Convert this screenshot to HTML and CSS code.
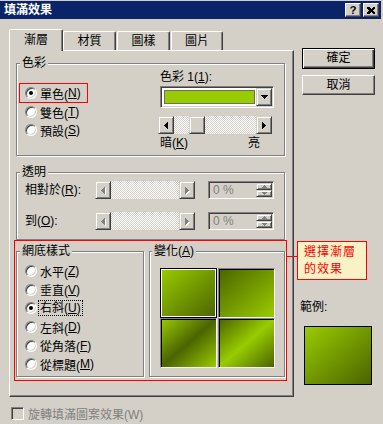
FILE: index.html
```html
<!DOCTYPE html>
<html lang="zh-Hant">
<head>
    <meta charset="UTF-8">
    <title>填滿效果</title>
    <link rel="stylesheet" href="styles.css">
</head>
<body>
<div class="window">
    <div class="titlebar">
        <span class="title">填滿效果</span>
        <span class="caption-btns">
            <span class="cap-btn">?</span>
            <span class="cap-btn">
                <svg width="8" height="7" viewBox="0 0 8 7" shape-rendering="crispEdges"><path d="M0 0h2l2 2 2-2h2v1l-2 2.5 2 2.5v1h-2l-2-2-2 2h-2v-1l2-2.5-2-2.5z"/></svg>
            </span>
        </span>
    </div>

    <div class="content">
        <div class="main">
            <div class="tabs">
                <div class="tab active">漸層</div>
                <div class="tab">材質</div>
                <div class="tab">圖樣</div>
                <div class="tab last">圖片</div>
            </div>
            <div class="panel">
                <fieldset class="group">
                    <legend>色彩</legend>
                    <div class="color-body">
                        <div class="radio-col">
                            <div class="radio marked"><span class="rb on"></span>單色(<u>N</u>)</div>
                            <div class="radio"><span class="rb"></span>雙色(<u>T</u>)</div>
                            <div class="radio"><span class="rb"></span>預設(<u>S</u>)</div>
                        </div>
                        <div class="color-col">
                            <div class="field-label">色彩 1(<u>1</u>):</div>
                            <div class="combo">
                                <span class="swatch"></span>
                                <span class="btn3d drop-btn">
                                    <svg width="7" height="4" viewBox="0 0 7 4" shape-rendering="crispEdges"><path d="M0 0H7V1H6V2H5V3H4V4H3V3H2V2H1V1H0Z"/></svg>
                                </span>
                            </div>
                            <div class="scroll color-scroll">
                                <span class="btn3d sb-btn">
                                    <svg width="4" height="7" viewBox="0 0 4 7" shape-rendering="crispEdges"><path d="M3 0H4V7H3V6H2V5H1V4H0V3H1V2H2V1H3Z"/></svg>
                                </span>
                                <span class="track"><span class="btn3d thumb"></span></span>
                                <span class="btn3d sb-btn">
                                    <svg width="4" height="7" viewBox="0 0 4 7" shape-rendering="crispEdges"><path d="M0 0H1V1H2V2H3V3H4V4H3V5H2V6H1V7H0Z"/></svg>
                                </span>
                            </div>
                            <div class="range-labels"><span>暗(<u>K</u>)</span><span>亮</span></div>
                        </div>
                    </div>
                </fieldset>

                <fieldset class="group trans">
                    <legend>透明</legend>
                    <div class="trans-body">
                        <div class="trow">
                            <span class="lbl">相對於(<u>R</u>):</span>
                            <div class="scroll off">
                                <span class="btn3d sb-btn">
                                    <svg width="4" height="7" viewBox="0 0 4 7" shape-rendering="crispEdges"><path d="M3 0H4V7H3V6H2V5H1V4H0V3H1V2H2V1H3Z"/></svg>
                                </span>
                                <span class="track"></span>
                                <span class="btn3d sb-btn">
                                    <svg width="4" height="7" viewBox="0 0 4 7" shape-rendering="crispEdges"><path d="M0 0H1V1H2V2H3V3H4V4H3V5H2V6H1V7H0Z"/></svg>
                                </span>
                            </div>
                            <div class="spin">
                                <span class="spin-val">0 %</span>
                                <span class="spin-btns">
                                    <span class="btn3d spin-btn"><svg width="5" height="3" viewBox="0 0 5 3" shape-rendering="crispEdges"><path d="M2 0H3V1H4V2H5V3H0V2H1V1H2Z"/></svg></span>
                                    <span class="btn3d spin-btn"><svg width="5" height="3" viewBox="0 0 5 3" shape-rendering="crispEdges"><path d="M0 0H5V1H4V2H3V3H2V2H1V1H0Z"/></svg></span>
                                </span>
                            </div>
                        </div>
                        <div class="trow">
                            <span class="lbl">到(<u>O</u>):</span>
                            <div class="scroll off">
                                <span class="btn3d sb-btn">
                                    <svg width="4" height="7" viewBox="0 0 4 7" shape-rendering="crispEdges"><path d="M3 0H4V7H3V6H2V5H1V4H0V3H1V2H2V1H3Z"/></svg>
                                </span>
                                <span class="track"></span>
                                <span class="btn3d sb-btn">
                                    <svg width="4" height="7" viewBox="0 0 4 7" shape-rendering="crispEdges"><path d="M0 0H1V1H2V2H3V3H4V4H3V5H2V6H1V7H0Z"/></svg>
                                </span>
                            </div>
                            <div class="spin">
                                <span class="spin-val">0 %</span>
                                <span class="spin-btns">
                                    <span class="btn3d spin-btn"><svg width="5" height="3" viewBox="0 0 5 3" shape-rendering="crispEdges"><path d="M2 0H3V1H4V2H5V3H0V2H1V1H2Z"/></svg></span>
                                    <span class="btn3d spin-btn"><svg width="5" height="3" viewBox="0 0 5 3" shape-rendering="crispEdges"><path d="M0 0H5V1H4V2H3V3H2V2H1V1H0Z"/></svg></span>
                                </span>
                            </div>
                        </div>
                    </div>
                </fieldset>

                <div class="highlight">
                    <fieldset class="group pattern">
                        <legend>網底樣式</legend>
                        <div class="pattern-body">
                            <div class="radio"><span class="rb"></span>水平(<u>Z</u>)</div>
                            <div class="radio"><span class="rb"></span>垂直(<u>V</u>)</div>
                            <div class="radio"><span class="rb on"></span><span class="focus">右斜(<u>U</u>)</span></div>
                            <div class="radio"><span class="rb"></span>左斜(<u>D</u>)</div>
                            <div class="radio"><span class="rb"></span>從角落(<u>F</u>)</div>
                            <div class="radio"><span class="rb"></span>從標題(<u>M</u>)</div>
                        </div>
                    </fieldset>
                    <fieldset class="group variants">
                        <legend class="narrow">變化(<u>A</u>)</legend>
                        <div class="tiles">
                            <span class="tile g1 selected"></span>
                            <span class="tile g2"></span>
                            <span class="tile g3"></span>
                            <span class="tile g4"></span>
                        </div>
                    </fieldset>
                </div>
            </div>
            <div class="check">
                <span class="cb"></span>旋轉填滿圖案效果(W)
            </div>
        </div>

        <div class="side">
            <div class="btn default">確定</div>
            <div class="btn">取消</div>
            <div class="sample-label">範例:</div>
            <div class="sample"></div>
        </div>
    </div>

    <span class="callout-line"></span>
    <div class="callout">選擇漸層<br>的效果</div>
</div>
</body>
</html>
```

FILE: styles.css
```css
body {
    margin: 0;
    background: #d4d0c8;
    font-family: "Liberation Sans", "Noto Sans CJK TC", sans-serif;
    font-size: 12px;
    color: #000;
}
.window {
    position: relative;
    width: 383px;
    height: 424px;
    overflow: hidden;
}

/* title bar */
.titlebar {
    display: flex;
    align-items: center;
    justify-content: space-between;
    height: 18px;
    margin: 1px 2px 0 0;
    padding: 0 2px 0 4px;
    background: #0a246a;
    color: #fff;
}
.title {
    font-weight: bold;
    line-height: 18px;
}
.caption-btns {
    display: flex;
    gap: 2px;
}
.cap-btn {
    display: flex;
    align-items: center;
    justify-content: center;
    width: 16px;
    height: 14px;
    box-sizing: border-box;
    background: #d4d0c8;
    border: 1px solid;
    border-color: #fff #404040 #404040 #fff;
    box-shadow: inset -1px -1px #808080;
    color: #000;
    font: bold 11px "Liberation Sans", sans-serif;
}

/* shared 3d pieces */
.btn3d {
    display: flex;
    align-items: center;
    justify-content: center;
    box-sizing: border-box;
    background: #d4d0c8;
    border: 1px solid;
    border-color: #d4d0c8 #404040 #404040 #d4d0c8;
    box-shadow: inset 1px 1px #fff, inset -1px -1px #808080;
}

.content {
    display: flex;
}
.main {
    margin-left: 9px;
    width: 285px;
    padding-top: 10px;
}

/* tabs */
.tabs {
    display: flex;
    align-items: flex-end;
    height: 21px;
}
.tab {
    width: 53px;
    height: 19px;
    box-sizing: border-box;
    margin-left: 1px;
    border: 1px solid;
    border-bottom: none;
    border-color: #fff #404040 transparent #fff;
    border-radius: 2px 2px 0 0;
    box-shadow: inset -1px 0 #808080;
    text-align: center;
    line-height: 18px;
}
.tab.active {
    position: relative;
    z-index: 1;
    width: 54px;
    height: 22px;
    margin: 0 0 -1px 0;
    background: #d4d0c8;
    line-height: 20px;
}
.tab.active + .tab {
    margin-left: 0;
}
.tab.last {
    width: 52px;
}
.panel {
    height: 347px;
    box-sizing: border-box;
    border: 1px solid;
    border-color: #fff #404040 #404040 #fff;
    box-shadow: inset -1px -1px #808080;
    padding: 5px 0 0 6px;
}

/* group boxes */
.group {
    margin: 0;
    padding: 0;
    min-width: 0;
    width: 269px;
    box-sizing: border-box;
    border: 1px solid #808080;
    box-shadow: inset 1px 1px #fff, 1px 1px #fff;
}
.group legend {
    margin-left: 3px;
    padding: 0 2px;
    line-height: 14px;
    background: #d4d0c8;
}
.group legend.narrow {
    margin-left: 2px;
}

.color-body {
    display: flex;
    padding: 0 0 5px 2px;
}
.radio-col {
    width: 139px;
    padding: 13px 0 0 6px;
    box-sizing: border-box;
}
.radio {
    display: flex;
    align-items: center;
    height: 18px;
    box-sizing: border-box;
    white-space: nowrap;
}
.radio.marked {
    width: 69px;
    height: 20px;
    margin-left: -6px;
    padding-left: 5px;
    border: 1px solid #f00;
}
.rb {
    position: relative;
    flex: none;
    width: 12px;
    height: 12px;
    box-sizing: border-box;
    margin-right: 3px;
    border-radius: 50%;
    background: #fff;
    border: 1px solid;
    border-color: #808080 #fff #fff #808080;
    box-shadow: inset 1px 1px #404040, inset -1px -1px #d4d0c8;
}
.rb.on::after {
    content: "";
    position: absolute;
    left: 3px;
    top: 3px;
    width: 4px;
    height: 4px;
    border-radius: 50%;
    background: #000;
}

.color-col {
    width: 115px;
}
.field-label {
    padding-left: 2px;
    line-height: 14px;
}
.combo {
    display: flex;
    align-items: center;
    width: 114px;
    height: 22px;
    box-sizing: border-box;
    margin: 2px 0 0 2px;
    padding: 1px;
    background: #fff;
    border: 1px solid;
    border-color: #808080 #fff #fff #808080;
    box-shadow: inset 1px 1px #404040, inset -1px -1px #d4d0c8;
}
.swatch {
    width: 91px;
    height: 14px;
    box-sizing: border-box;
    margin: 0 1px 0 2px;
    background: #99cc00;
    border: 1px solid #6d6d6d;
}
.drop-btn {
    width: 16px;
    height: 18px;
}

/* scroll bars */
.scroll {
    display: flex;
    height: 18px;
}
.color-scroll {
    width: 114px;
    margin-top: 8px;
}
.sb-btn {
    flex: none;
    width: 16px;
}
.track {
    flex: 1;
    display: flex;
    background-image: conic-gradient(#fff 25%, #d4d0c8 0 50%, #fff 0 75%, #d4d0c8 0);
    background-size: 2px 2px;
}
.thumb {
    width: 16px;
    margin-left: 15px;
}
.range-labels {
    display: flex;
    justify-content: space-between;
    width: 102px;
    box-sizing: border-box;
    margin-top: 2px;
    padding-left: 2px;
    line-height: 14px;
}

/* transparency */
.trans {
    margin-top: 9px;
}
.trans-body {
    padding: 2px 0 9px 8px;
}
.trow {
    display: flex;
    align-items: center;
    height: 18px;
}
.trow + .trow {
    margin-top: 13px;
}
.trow .lbl {
    width: 70px;
    line-height: 14px;
}
.scroll.off {
    width: 100px;
}
.scroll.off svg {
    fill: #808080;
    filter: drop-shadow(1px 1px 0 #fff);
}
.spin {
    display: flex;
    align-items: stretch;
    width: 66px;
    height: 18px;
    box-sizing: border-box;
    margin-left: 13px;
    padding: 1px;
    border: 1px solid;
    border-color: #808080 #fff #fff #808080;
    box-shadow: inset 1px 1px #404040, inset -1px -1px #d4d0c8;
}
.spin-val {
    flex: 1;
    padding-left: 3px;
    color: #808080;
    line-height: 14px;
}
.spin-btns {
    display: flex;
    flex-direction: column;
    width: 16px;
}
.spin-btn {
    flex: 1;
}
.spin-btn svg {
    fill: #808080;
}

/* highlighted pattern area */
.highlight {
    display: flex;
    gap: 5px;
    width: 273px;
    box-sizing: border-box;
    margin-left: -2px;
    padding: 3px 1px 3px 1px;
    border: 1px solid #f00;
}
.pattern {
    width: 128px;
}
.pattern-body {
    padding: 4px 0 2px 8px;
}
.pattern-body .radio {
    height: 18.6px;
}
.focus {
    margin-left: -2px;
    padding: 0 1px;
    border: 1px dotted #000;
    line-height: 14px;
}
.variants {
    width: 136px;
}
.tiles {
    display: grid;
    grid-template-columns: 57px 57px;
    grid-auto-rows: 50px;
    column-gap: 1px;
    padding: 10px 0 0 10px;
}
.tile {
    box-sizing: border-box;
    border: 1px solid;
    border-color: #808080 #fff #fff #808080;
    box-shadow: inset 1px 1px #000;
}
.tile.selected {
    border-color: #000;
    box-shadow: inset 0 0 0 1px #fff;
}
.g1 { background: linear-gradient(to bottom right, #99cc00, #4b6400); }
.g2 { background: linear-gradient(to bottom right, #4b6400, #99cc00); }
.g3 { background: linear-gradient(to bottom right, #99cc00, #4b6400 50%, #99cc00); }
.g4 { background: linear-gradient(to bottom right, #4b6400, #99cc00 50%, #4b6400); }

/* bottom checkbox */
.check {
    display: flex;
    align-items: center;
    height: 13px;
    margin: 10px 0 0 2px;
    color: #808080;
    white-space: nowrap;
}
.cb {
    width: 13px;
    height: 13px;
    box-sizing: border-box;
    margin-right: 4px;
    background: #d4d0c8;
    border: 1px solid;
    border-color: #808080 #fff #fff #808080;
    box-shadow: inset 1px 1px #404040, inset -1px -1px #d4d0c8;
}

/* right side */
.side {
    width: 73px;
    margin-left: 8px;
    padding-top: 29px;
}
.btn {
    height: 20px;
    box-sizing: border-box;
    border: 1px solid;
    border-color: #fff #404040 #404040 #fff;
    box-shadow: inset -1px -1px #808080;
    text-align: center;
    line-height: 18px;
}
.btn.default {
    height: 21px;
    border-color: #000;
    box-shadow: inset 1px 1px #fff, inset -1px -1px #404040, inset -2px -2px #808080;
}
.btn + .btn {
    margin-top: 6px;
}
.sample-label {
    margin: 205px 0 0 -2px;
    line-height: 14px;
}
.sample {
    width: 68px;
    height: 59px;
    box-sizing: border-box;
    margin: 12px 0 0 2px;
    border: 1px solid #000;
    background: linear-gradient(to bottom right, #99cc00, #4b6300);
}

/* annotation */
.callout-line {
    position: absolute;
    left: 286px;
    top: 256px;
    width: 11px;
    height: 1px;
    background: #f00;
}
.callout {
    position: absolute;
    left: 297px;
    top: 241px;
    width: 70px;
    height: 39px;
    box-sizing: border-box;
    padding: 2px 0 0 6px;
    border: 1px solid #f00;
    background: #f9f2c7;
    color: #f00;
    line-height: 17px;
    letter-spacing: 1px;
}
```
